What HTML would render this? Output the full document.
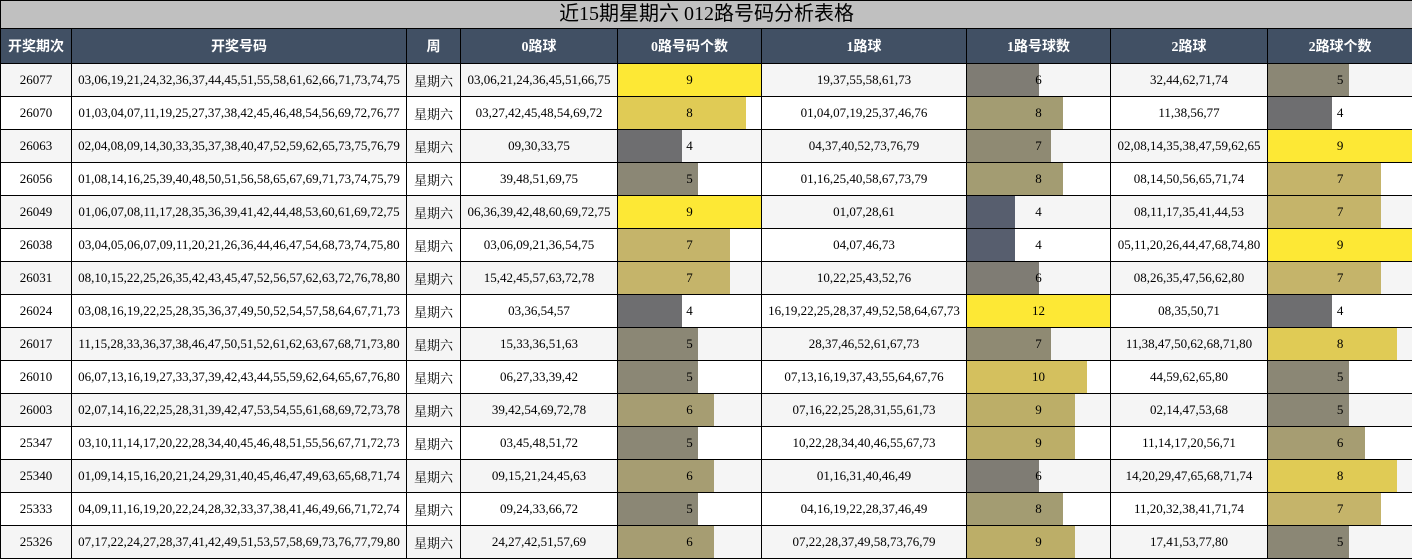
<!DOCTYPE html>
<html><head><meta charset="utf-8"><style>
body{margin:0;width:1412px;height:560px;overflow:hidden;background:#fff;font-family:"Liberation Serif","Noto Serif CJK SC","Noto Sans CJK SC",serif;}
table{border-collapse:collapse;table-layout:fixed;width:1412px;}
td,th{border:1px solid #000;padding:0;text-align:center;white-space:nowrap;overflow:hidden;}
.t td{height:27px;line-height:27px;background:#c0c0c0;font-size:20px;font-family:"Liberation Serif","Noto Sans CJK SC",serif;}
th{height:34px;background:#415064;color:#fff;font-size:14px;font-weight:bold;font-family:"Liberation Serif","Noto Sans CJK SC",sans-serif;}
.d td{height:32px;font-size:13px;position:relative;}
.d:nth-child(odd) td{background:#f5f5f5;}
.b{position:relative;height:32px;line-height:32px;}
.b i{position:absolute;left:0;top:0;bottom:0;}
.b span{position:relative;}
</style></head><body>
<table>
<colgroup><col style="width:71px"><col style="width:335px"><col style="width:54px"><col style="width:157px"><col style="width:144px"><col style="width:205px"><col style="width:144px"><col style="width:157px"><col style="width:145px"></colgroup>
<tr class="t"><td colspan="9">近15期星期六 012路号码分析表格</td></tr>
<tr><th>开奖期次</th><th>开奖号码</th><th>周</th><th>0路球</th><th>0路号码个数</th><th>1路球</th><th>1路号球数</th><th>2路球</th><th>2路球个数</th></tr>
<tbody>
<tr class="d"><td>26077</td><td>03,06,19,21,24,32,36,37,44,45,51,55,58,61,62,66,71,73,74,75</td><td>星期六</td><td>03,06,21,24,36,45,51,66,75</td><td><div class="b"><i style="width:144px;background:#fde835"></i><span>9</span></div></td><td>19,37,55,58,61,73</td><td><div class="b"><i style="width:72px;background:#7f7c74"></i><span>6</span></div></td><td>32,44,62,71,74</td><td><div class="b"><i style="width:81px;background:#8b8775"></i><span>5</span></div></td></tr>
<tr class="d"><td>26070</td><td>01,03,04,07,11,19,25,27,37,38,42,45,46,48,54,56,69,72,76,77</td><td>星期六</td><td>03,27,42,45,48,54,69,72</td><td><div class="b"><i style="width:128px;background:#e0cb55"></i><span>8</span></div></td><td>01,04,07,19,25,37,46,76</td><td><div class="b"><i style="width:96px;background:#a39c72"></i><span>8</span></div></td><td>11,38,56,77</td><td><div class="b"><i style="width:64px;background:#6e6e70"></i><span>4</span></div></td></tr>
<tr class="d"><td>26063</td><td>02,04,08,09,14,30,33,35,37,38,40,47,52,59,62,65,73,75,76,79</td><td>星期六</td><td>09,30,33,75</td><td><div class="b"><i style="width:64px;background:#6e6e70"></i><span>4</span></div></td><td>04,37,40,52,73,76,79</td><td><div class="b"><i style="width:84px;background:#8f8a73"></i><span>7</span></div></td><td>02,08,14,35,38,47,59,62,65</td><td><div class="b"><i style="width:145px;background:#fde835"></i><span>9</span></div></td></tr>
<tr class="d"><td>26056</td><td>01,08,14,16,25,39,40,48,50,51,56,58,65,67,69,71,73,74,75,79</td><td>星期六</td><td>39,48,51,69,75</td><td><div class="b"><i style="width:80px;background:#8b8775"></i><span>5</span></div></td><td>01,16,25,40,58,67,73,79</td><td><div class="b"><i style="width:96px;background:#a39c72"></i><span>8</span></div></td><td>08,14,50,56,65,71,74</td><td><div class="b"><i style="width:113px;background:#c5b46a"></i><span>7</span></div></td></tr>
<tr class="d"><td>26049</td><td>01,06,07,08,11,17,28,35,36,39,41,42,44,48,53,60,61,69,72,75</td><td>星期六</td><td>06,36,39,42,48,60,69,72,75</td><td><div class="b"><i style="width:144px;background:#fde835"></i><span>9</span></div></td><td>01,07,28,61</td><td><div class="b"><i style="width:48px;background:#575e6e"></i><span>4</span></div></td><td>08,11,17,35,41,44,53</td><td><div class="b"><i style="width:113px;background:#c5b46a"></i><span>7</span></div></td></tr>
<tr class="d"><td>26038</td><td>03,04,05,06,07,09,11,20,21,26,36,44,46,47,54,68,73,74,75,80</td><td>星期六</td><td>03,06,09,21,36,54,75</td><td><div class="b"><i style="width:112px;background:#c5b46a"></i><span>7</span></div></td><td>04,07,46,73</td><td><div class="b"><i style="width:48px;background:#575e6e"></i><span>4</span></div></td><td>05,11,20,26,44,47,68,74,80</td><td><div class="b"><i style="width:145px;background:#fde835"></i><span>9</span></div></td></tr>
<tr class="d"><td>26031</td><td>08,10,15,22,25,26,35,42,43,45,47,52,56,57,62,63,72,76,78,80</td><td>星期六</td><td>15,42,45,57,63,72,78</td><td><div class="b"><i style="width:112px;background:#c5b46a"></i><span>7</span></div></td><td>10,22,25,43,52,76</td><td><div class="b"><i style="width:72px;background:#7f7c74"></i><span>6</span></div></td><td>08,26,35,47,56,62,80</td><td><div class="b"><i style="width:113px;background:#c5b46a"></i><span>7</span></div></td></tr>
<tr class="d"><td>26024</td><td>03,08,16,19,22,25,28,35,36,37,49,50,52,54,57,58,64,67,71,73</td><td>星期六</td><td>03,36,54,57</td><td><div class="b"><i style="width:64px;background:#6e6e70"></i><span>4</span></div></td><td>16,19,22,25,28,37,49,52,58,64,67,73</td><td><div class="b"><i style="width:144px;background:#fde835"></i><span>12</span></div></td><td>08,35,50,71</td><td><div class="b"><i style="width:64px;background:#6e6e70"></i><span>4</span></div></td></tr>
<tr class="d"><td>26017</td><td>11,15,28,33,36,37,38,46,47,50,51,52,61,62,63,67,68,71,73,80</td><td>星期六</td><td>15,33,36,51,63</td><td><div class="b"><i style="width:80px;background:#8b8775"></i><span>5</span></div></td><td>28,37,46,52,61,67,73</td><td><div class="b"><i style="width:84px;background:#8f8a73"></i><span>7</span></div></td><td>11,38,47,50,62,68,71,80</td><td><div class="b"><i style="width:129px;background:#e0cb55"></i><span>8</span></div></td></tr>
<tr class="d"><td>26010</td><td>06,07,13,16,19,27,33,37,39,42,43,44,55,59,62,64,65,67,76,80</td><td>星期六</td><td>06,27,33,39,42</td><td><div class="b"><i style="width:80px;background:#8b8775"></i><span>5</span></div></td><td>07,13,16,19,37,43,55,64,67,76</td><td><div class="b"><i style="width:120px;background:#d4c05e"></i><span>10</span></div></td><td>44,59,62,65,80</td><td><div class="b"><i style="width:81px;background:#8b8775"></i><span>5</span></div></td></tr>
<tr class="d"><td>26003</td><td>02,07,14,16,22,25,28,31,39,42,47,53,54,55,61,68,69,72,73,78</td><td>星期六</td><td>39,42,54,69,72,78</td><td><div class="b"><i style="width:96px;background:#a69d72"></i><span>6</span></div></td><td>07,16,22,25,28,31,55,61,73</td><td><div class="b"><i style="width:108px;background:#bcae68"></i><span>9</span></div></td><td>02,14,47,53,68</td><td><div class="b"><i style="width:81px;background:#8b8775"></i><span>5</span></div></td></tr>
<tr class="d"><td>25347</td><td>03,10,11,14,17,20,22,28,34,40,45,46,48,51,55,56,67,71,72,73</td><td>星期六</td><td>03,45,48,51,72</td><td><div class="b"><i style="width:80px;background:#8b8775"></i><span>5</span></div></td><td>10,22,28,34,40,46,55,67,73</td><td><div class="b"><i style="width:108px;background:#bcae68"></i><span>9</span></div></td><td>11,14,17,20,56,71</td><td><div class="b"><i style="width:97px;background:#a69d72"></i><span>6</span></div></td></tr>
<tr class="d"><td>25340</td><td>01,09,14,15,16,20,21,24,29,31,40,45,46,47,49,63,65,68,71,74</td><td>星期六</td><td>09,15,21,24,45,63</td><td><div class="b"><i style="width:96px;background:#a69d72"></i><span>6</span></div></td><td>01,16,31,40,46,49</td><td><div class="b"><i style="width:72px;background:#7f7c74"></i><span>6</span></div></td><td>14,20,29,47,65,68,71,74</td><td><div class="b"><i style="width:129px;background:#e0cb55"></i><span>8</span></div></td></tr>
<tr class="d"><td>25333</td><td>04,09,11,16,19,20,22,24,28,32,33,37,38,41,46,49,66,71,72,74</td><td>星期六</td><td>09,24,33,66,72</td><td><div class="b"><i style="width:80px;background:#8b8775"></i><span>5</span></div></td><td>04,16,19,22,28,37,46,49</td><td><div class="b"><i style="width:96px;background:#a39c72"></i><span>8</span></div></td><td>11,20,32,38,41,71,74</td><td><div class="b"><i style="width:113px;background:#c5b46a"></i><span>7</span></div></td></tr>
<tr class="d"><td>25326</td><td>07,17,22,24,27,28,37,41,42,49,51,53,57,58,69,73,76,77,79,80</td><td>星期六</td><td>24,27,42,51,57,69</td><td><div class="b"><i style="width:96px;background:#a69d72"></i><span>6</span></div></td><td>07,22,28,37,49,58,73,76,79</td><td><div class="b"><i style="width:108px;background:#bcae68"></i><span>9</span></div></td><td>17,41,53,77,80</td><td><div class="b"><i style="width:81px;background:#8b8775"></i><span>5</span></div></td></tr>
</tbody></table>
</body></html>
